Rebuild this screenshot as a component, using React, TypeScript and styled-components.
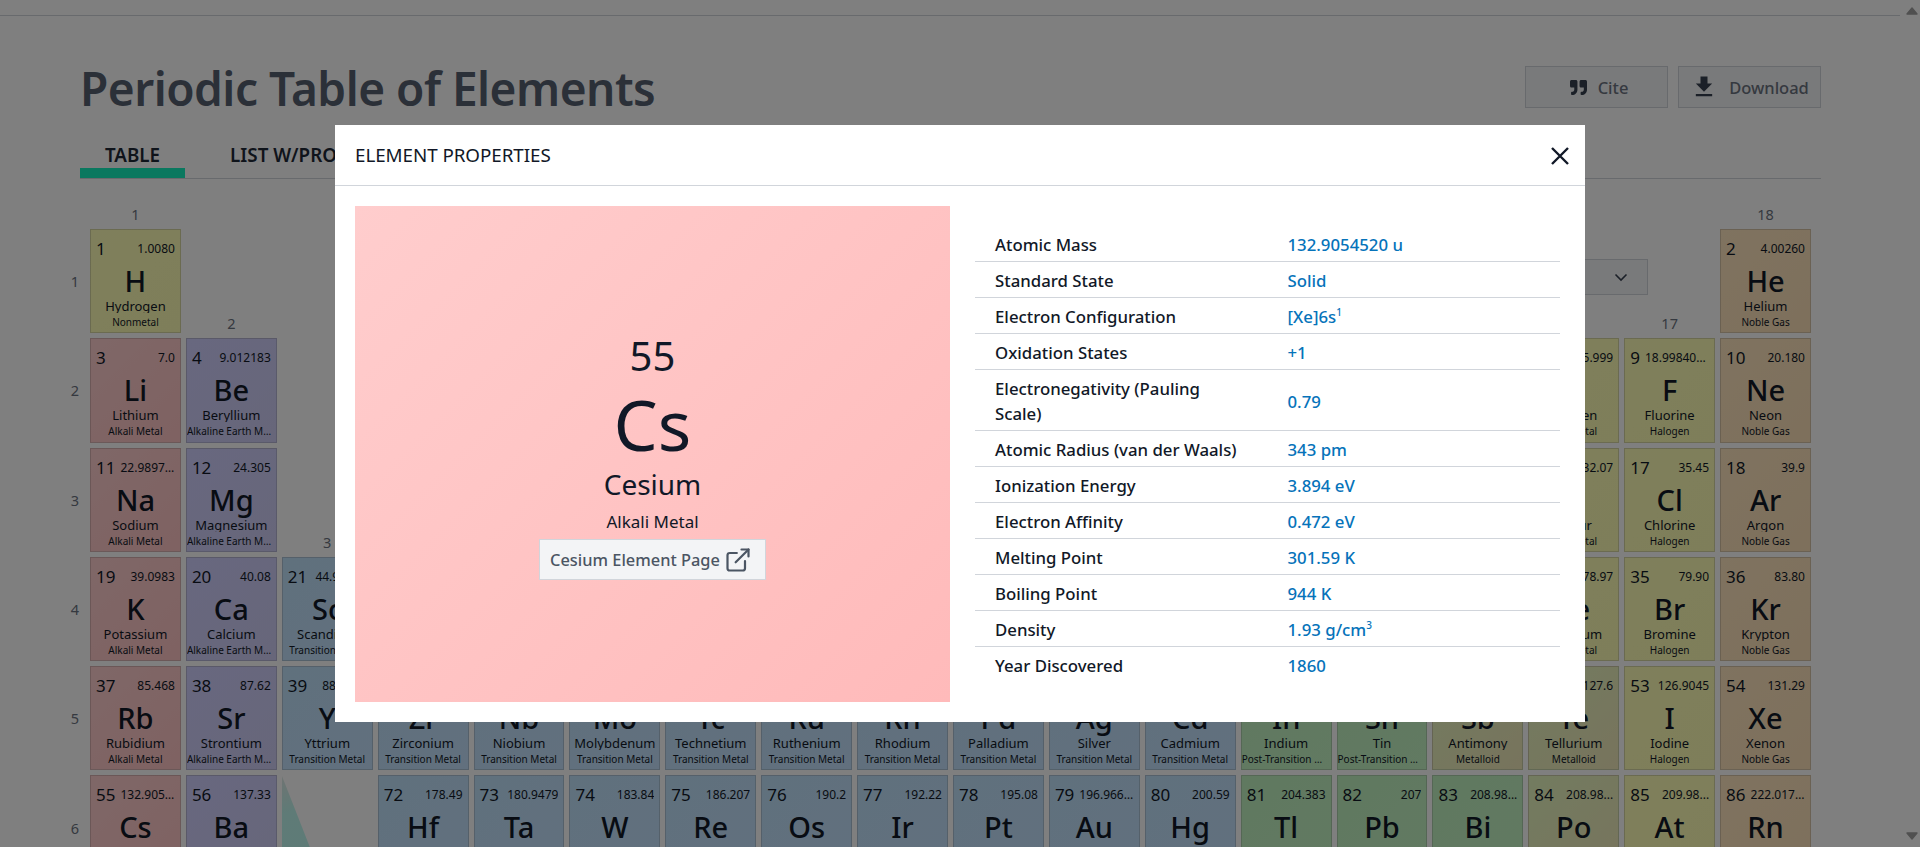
import React from 'react';
import styled, { createGlobalStyle } from 'styled-components';
import { ExternalLink } from 'lucide-react';
import { FaQuoteRight } from 'react-icons/fa';
import { MdDownload } from 'react-icons/md';

const FONT = '"Noto Sans", "Open Sans", sans-serif';

const Global = createGlobalStyle`
  html, body { margin: 0; padding: 0; height: 847px; overflow: hidden; background: #fff; }
  body { font-family: ${FONT}; color: #111827; }
  * { box-sizing: border-box; }
`;

type Cat = 'nonmetal' | 'alkali' | 'alkaline' | 'transition' | 'post' | 'metalloid' | 'halogen' | 'noble';

const FILL: Record<Cat, string> = {
  nonmetal: 'linear-gradient(135deg, #ffffb8, #fdfdb4)',
  halogen: 'linear-gradient(135deg, #ffffb8, #fdfdb4)',
  alkali: 'linear-gradient(135deg, #ffcfcf, #ffc4c4)',
  alkaline: 'linear-gradient(135deg, #d0d0ff, #cfcdf4)',
  transition: 'linear-gradient(135deg, #c0e2fb, #c4e0fc)',
  post: 'linear-gradient(135deg, #c0f2c0, #c4f4c4)',
  metalloid: 'linear-gradient(135deg, #e6f8c0, #f0e8ba)',
  noble: 'linear-gradient(135deg, #ffe6c0, #fce0b8)',
};

const CAT_NAME: Record<Cat, string> = {
  nonmetal: 'Nonmetal',
  halogen: 'Halogen',
  alkali: 'Alkali Metal',
  alkaline: 'Alkaline Earth Metal',
  transition: 'Transition Metal',
  post: 'Post-Transition Metal',
  metalloid: 'Metalloid',
  noble: 'Noble Gas',
};

type El = [number, string, string, string, Cat, number, number];

const ELEMENTS: El[] = [
  [1, 'H', 'Hydrogen', '1.0080', 'nonmetal', 1, 1],
  [2, 'He', 'Helium', '4.00260', 'noble', 1, 18],
  [3, 'Li', 'Lithium', '7.0', 'alkali', 2, 1],
  [4, 'Be', 'Beryllium', '9.012183', 'alkaline', 2, 2],
  [8, 'O', 'Oxygen', '15.999', 'nonmetal', 2, 16],
  [9, 'F', 'Fluorine', '18.99840316', 'halogen', 2, 17],
  [10, 'Ne', 'Neon', '20.180', 'noble', 2, 18],
  [11, 'Na', 'Sodium', '22.9897693', 'alkali', 3, 1],
  [12, 'Mg', 'Magnesium', '24.305', 'alkaline', 3, 2],
  [16, 'S', 'Sulfur', '32.07', 'nonmetal', 3, 16],
  [17, 'Cl', 'Chlorine', '35.45', 'halogen', 3, 17],
  [18, 'Ar', 'Argon', '39.9', 'noble', 3, 18],
  [19, 'K', 'Potassium', '39.0983', 'alkali', 4, 1],
  [20, 'Ca', 'Calcium', '40.08', 'alkaline', 4, 2],
  [21, 'Sc', 'Scandium', '44.95591', 'transition', 4, 3],
  [34, 'Se', 'Selenium', '78.97', 'nonmetal', 4, 16],
  [35, 'Br', 'Bromine', '79.90', 'halogen', 4, 17],
  [36, 'Kr', 'Krypton', '83.80', 'noble', 4, 18],
  [37, 'Rb', 'Rubidium', '85.468', 'alkali', 5, 1],
  [38, 'Sr', 'Strontium', '87.62', 'alkaline', 5, 2],
  [39, 'Y', 'Yttrium', '88.9058', 'transition', 5, 3],
  [40, 'Zr', 'Zirconium', '91.224', 'transition', 5, 4],
  [41, 'Nb', 'Niobium', '92.90637', 'transition', 5, 5],
  [42, 'Mo', 'Molybdenum', '95.95', 'transition', 5, 6],
  [43, 'Tc', 'Technetium', '96.90636', 'transition', 5, 7],
  [44, 'Ru', 'Ruthenium', '101.1', 'transition', 5, 8],
  [45, 'Rh', 'Rhodium', '102.9055', 'transition', 5, 9],
  [46, 'Pd', 'Palladium', '106.42', 'transition', 5, 10],
  [47, 'Ag', 'Silver', '107.868', 'transition', 5, 11],
  [48, 'Cd', 'Cadmium', '112.41', 'transition', 5, 12],
  [49, 'In', 'Indium', '114.818', 'post', 5, 13],
  [50, 'Sn', 'Tin', '118.71', 'post', 5, 14],
  [51, 'Sb', 'Antimony', '121.760', 'metalloid', 5, 15],
  [52, 'Te', 'Tellurium', '127.6', 'metalloid', 5, 16],
  [53, 'I', 'Iodine', '126.9045', 'halogen', 5, 17],
  [54, 'Xe', 'Xenon', '131.29', 'noble', 5, 18],
  [55, 'Cs', 'Cesium', '132.9054520', 'alkali', 6, 1],
  [56, 'Ba', 'Barium', '137.33', 'alkaline', 6, 2],
  [72, 'Hf', 'Hafnium', '178.49', 'transition', 6, 4],
  [73, 'Ta', 'Tantalum', '180.9479', 'transition', 6, 5],
  [74, 'W', 'Tungsten', '183.84', 'transition', 6, 6],
  [75, 'Re', 'Rhenium', '186.207', 'transition', 6, 7],
  [76, 'Os', 'Osmium', '190.2', 'transition', 6, 8],
  [77, 'Ir', 'Iridium', '192.22', 'transition', 6, 9],
  [78, 'Pt', 'Platinum', '195.08', 'transition', 6, 10],
  [79, 'Au', 'Gold', '196.96657', 'transition', 6, 11],
  [80, 'Hg', 'Mercury', '200.59', 'transition', 6, 12],
  [81, 'Tl', 'Thallium', '204.383', 'post', 6, 13],
  [82, 'Pb', 'Lead', '207', 'post', 6, 14],
  [83, 'Bi', 'Bismuth', '208.98...', 'post', 6, 15],
  [84, 'Po', 'Polonium', '208.98...', 'metalloid', 6, 16],
  [85, 'At', 'Astatine', '209.98...', 'halogen', 6, 17],
  [86, 'Rn', 'Radon', '222.01758', 'noble', 6, 18],
];

const GROUPS: [number, number][] = [
  [1, 0],
  [18, 0],
  [2, 1],
  [17, 1],
  [3, 3],
];

const PROPS: [string, React.ReactNode][] = [
  ['Atomic Mass', '132.9054520 u'],
  ['Standard State', 'Solid'],
  ['Electron Configuration', <>[Xe]6s<sup>1</sup></>],
  ['Oxidation States', '+1'],
  ['Electronegativity (Pauling Scale)', '0.79'],
  ['Atomic Radius (van der Waals)', '343 pm'],
  ['Ionization Energy', '3.894 eV'],
  ['Electron Affinity', '0.472 eV'],
  ['Melting Point', '301.59 K'],
  ['Boiling Point', '944 K'],
  ['Density', <>1.93 g/cm<sup>3</sup></>],
  ['Year Discovered', '1860'],
];

const Shell = styled.div`
  display: flex;
  height: 847px;
  overflow: hidden;
`;

const Page = styled.main`
  flex: 1;
  min-width: 0;
  overflow: hidden;
`;

const TopRule = styled.div`
  height: 1px;
  margin: 15px 3px 0 0;
  background: #d1d5db;
`;

const Content = styled.div`
  padding: 50px 82px 0 80px;
`;

const Header = styled.header`
  display: flex;
  justify-content: space-between;
  align-items: center;
  height: 42px;
`;

const Title = styled.h1`
  margin: 2px 0 0;
  font-size: 46px;
  line-height: 42px;
  font-weight: 600;
  color: #566070;
  letter-spacing: -0.5px;
`;

const Actions = styled.div`
  display: flex;
  gap: 10px;
`;

const ActionButton = styled.button<{ $shift?: number }>`
  display: flex;
  align-items: center;
  justify-content: center;
  gap: 11px;
  width: 143px;
  height: 42px;
  padding: 0 0 0 ${(p) => p.$shift ?? 0}px;
  font: 500 16.5px ${FONT};
  color: #6b7280;
  background: #f3f4f6;
  border: 1px solid #d1d5db;
  svg { color: #374151; }
`;

const Tabs = styled.nav`
  display: flex;
  gap: 20px;
  padding-top: 34px;
  border-bottom: 1px solid #d1d5db;
`;

const Tab = styled.div<{ $active?: boolean }>`
  padding: 1px 25px 1px;
  font-size: 18.8px;
  line-height: 24px;
  font-weight: 600;
  color: #1f2937;
  border-bottom: 10px solid ${(p) => (p.$active ? '#14f0bf' : 'transparent')};
`;

const Grid = styled.div`
  display: grid;
  position: relative;
  margin: 25px 10px 0 -15px;
  grid-template-columns: 20px repeat(18, minmax(0, 1fr));
  grid-template-rows: 20px repeat(6, 104.3px);
  gap: 5px;
`;

const Axis = styled.div<{ $row: number; $col: number }>`
  grid-row: ${(p) => p.$row + 1};
  grid-column: ${(p) => p.$col + 1};
  align-self: ${(p) => (p.$col === 0 ? 'center' : 'end')};
  height: 20px;
  font-size: 14.5px;
  line-height: 21px;
  text-align: center;
  color: #6b7280;
`;

const Cell = styled.div<{ $row: number; $col: number; $cat: Cat }>`
  grid-row: ${(p) => p.$row + 1};
  grid-column: ${(p) => p.$col + 1};
  display: flex;
  flex-direction: column;
  align-items: center;
  min-width: 0;
  padding: 9px 5px 0;
  background: ${(p) => FILL[p.$cat]};
  border: 1px solid rgba(110, 110, 110, 0.28);
`;

const CellTop = styled.div`
  display: flex;
  align-items: center;
  width: 100%;
  height: 20px;
`;

const Num = styled.span`
  flex: none;
  font-size: 17px;
  line-height: 20px;
`;

const Mass = styled.span`
  flex: 1;
  min-width: 0;
  margin-left: 5px;
  font-size: 12px;
  line-height: 16px;
  text-align: right;
  white-space: nowrap;
  overflow: hidden;
  text-overflow: ellipsis;
`;

const Sym = styled.div`
  margin-top: 4px;
  font-size: 29px;
  line-height: 36px;
  font-weight: 500;
`;

const Name = styled.div`
  flex: none;
  width: calc(100% + 8px);
  font-size: 13px;
  line-height: 14px;
  height: 14px;
  text-align: center;
  white-space: nowrap;
  overflow: hidden;
  text-overflow: ellipsis;
`;

const CatLabel = styled.div`
  flex: none;
  width: calc(100% + 10px);
  margin-top: 3px;
  font-size: 10px;
  line-height: 13px;
  height: 13px;
  text-align: center;
  white-space: nowrap;
  overflow: hidden;
  text-overflow: ellipsis;
`;

const Wedge = styled.div`
  grid-row: 7;
  grid-column: 4;
  background: linear-gradient(165deg, #dfe8e6 0%, #bef6ee 30%, #bcf8f0 100%);
  clip-path: polygon(0 0, 45% 100%, 0 100%);
`;

const Select = styled.div`
  grid-row: 2;
  grid-column: 6 / 19;
  justify-self: end;
  align-self: start;
  display: flex;
  align-items: center;
  justify-content: flex-end;
  width: 500px;
  height: 36px;
  margin: 30px 67px 0 0;
  padding-right: 19px;
  background: #f3f4f6;
  border: 1px solid #d1d5db;
  color: #374151;
`;

const Rail = styled.aside`
  flex: none;
  width: 17px;
  display: flex;
  flex-direction: column;
  justify-content: space-between;
  align-items: center;
  padding: 7px 0;
  color: #a0a0a0;
`;

const Backdrop = styled.div`
  position: fixed;
  inset: 0;
  display: flex;
  align-items: center;
  justify-content: center;
  background: rgba(0, 0, 0, 0.5);
`;

const Modal = styled.section`
  width: 1250px;
  height: 597px;
  background: #fff;
`;

const ModalHead = styled.header`
  display: flex;
  align-items: center;
  justify-content: space-between;
  height: 61px;
  padding: 2px 15px 0 20px;
  border-bottom: 1px solid #d1d5db;
`;

const ModalTitle = styled.h2`
  margin: -3px 0 0;
  font-size: 18.8px;
  font-weight: 400;
  letter-spacing: -0.05px;
  color: #111827;
`;

const Close = styled.button`
  display: flex;
  padding: 0;
  background: none;
  border: 0;
  color: #111827;
`;

const ModalBody = styled.div`
  display: flex;
  gap: 25px;
  padding: 20px 25px 20px 20px;
`;

const Hero = styled.div`
  flex: none;
  display: flex;
  flex-direction: column;
  align-items: center;
  justify-content: center;
  width: 595px;
  height: 496px;
  background: linear-gradient(135deg, #ffcdcd, #ffbaba);
`;

const HeroNum = styled.div`
  font-size: 40px;
  line-height: 56px;
`;

const HeroSym = styled.div`
  font-size: 70px;
  line-height: 80px;
`;

const HeroName = styled.div`
  font-size: 28px;
  line-height: 40px;
`;

const HeroCat = styled.div`
  font-size: 17px;
  line-height: 35px;
`;

const PageLink = styled.a`
  display: flex;
  align-items: center;
  gap: 4px;
  width: 227px;
  height: 41px;
  padding: 0 10px;
  font-size: 16.4px;
  font-weight: 500;
  color: #4b5563;
  background: #f3f4f6;
  border: 1px solid #d1d5db;
  white-space: nowrap;
`;

const PropsWrap = styled.div`
  flex: 1;
  min-width: 0;
  display: flex;
  align-items: center;
`;

const PropsTable = styled.table`
  width: 100%;
  border-collapse: collapse;
  font-size: 16.8px;
  line-height: 25px;
  table-layout: fixed;
`;

const Row = styled.tr`
  border-bottom: 1px solid #d1d5db;
  &:last-child { border-bottom: 0; }
`;

const Key = styled.td`
  width: 312.5px;
  padding: 6px 46px 4px 20px;
  font-weight: 500;
  color: #111827;
`;

const Val = styled.td`
  padding: 6px 0 4px;
  font-weight: 500;
  color: #0673ba;
  sup { font-size: 10px; line-height: 0; }
`;

const Arrow = ({ down }: { down?: boolean }) => (
  <svg width="12" height="8" viewBox="0 0 12 8" aria-hidden="true">
    <path
      d={down ? 'M1 1h10L6 7z' : 'M1 7h10L6 1z'}
      fill="currentColor"
      stroke="currentColor"
      strokeWidth="1.4"
      strokeLinejoin="round"
    />
  </svg>
);

export default function App() {
  return (
    <Shell>
      <Global />
      <Page>
        <TopRule />
        <Content>
          <Header>
            <Title>Periodic Table of Elements</Title>
            <Actions>
              <ActionButton $shift={5}>
                <FaQuoteRight size={17} />
                Cite
              </ActionButton>
              <ActionButton>
                <MdDownload size={28} />
                Download
              </ActionButton>
            </Actions>
          </Header>
          <Tabs>
            <Tab $active>TABLE</Tab>
            <Tab>LIST W/PROPERTIES</Tab>
          </Tabs>
          <Grid>
            {[1, 2, 3, 4, 5, 6].map((r) => (
              <Axis key={`r${r}`} $row={r} $col={0}>{r}</Axis>
            ))}
            {GROUPS.map(([g, r]) => (
              <Axis key={`g${g}`} $row={r} $col={g}>{g}</Axis>
            ))}
            <Select>
              <svg width="14" height="9" viewBox="0 0 14 9" fill="none" stroke="currentColor" strokeWidth="1.6">
                <path d="M1.5 1.5 7 7l5.5-5.5" />
              </svg>
            </Select>
            <Wedge />
            {ELEMENTS.map(([n, s, name, mass, cat, r, c]) => (
              <Cell key={n} $row={r} $col={c} $cat={cat}>
                <CellTop>
                  <Num>{n}</Num>
                  <Mass>{mass}</Mass>
                </CellTop>
                <Sym>{s}</Sym>
                <Name>{name}</Name>
                <CatLabel>{CAT_NAME[cat]}</CatLabel>
              </Cell>
            ))}
          </Grid>
        </Content>
      </Page>
      <Rail>
        <Arrow />
        <Arrow down />
      </Rail>
      <Backdrop>
        <Modal>
          <ModalHead>
            <ModalTitle>ELEMENT PROPERTIES</ModalTitle>
            <Close aria-label="Close">
              <svg width="20" height="20" viewBox="0 0 20 20" fill="none" stroke="currentColor" strokeWidth="2.4">
                <path d="M2 2l16 16M18 2 2 18" />
              </svg>
            </Close>
          </ModalHead>
          <ModalBody>
            <Hero>
              <HeroNum>55</HeroNum>
              <HeroSym>Cs</HeroSym>
              <HeroName>Cesium</HeroName>
              <HeroCat>Alkali Metal</HeroCat>
              <PageLink>
                Cesium Element Page
                <ExternalLink size={28} strokeWidth={1.9} />
              </PageLink>
            </Hero>
            <PropsWrap>
              <PropsTable>
                <tbody>
                  {PROPS.map(([k, v]) => (
                    <Row key={k}>
                      <Key>{k}</Key>
                      <Val>{v}</Val>
                    </Row>
                  ))}
                </tbody>
              </PropsTable>
            </PropsWrap>
          </ModalBody>
        </Modal>
      </Backdrop>
    </Shell>
  );
}
